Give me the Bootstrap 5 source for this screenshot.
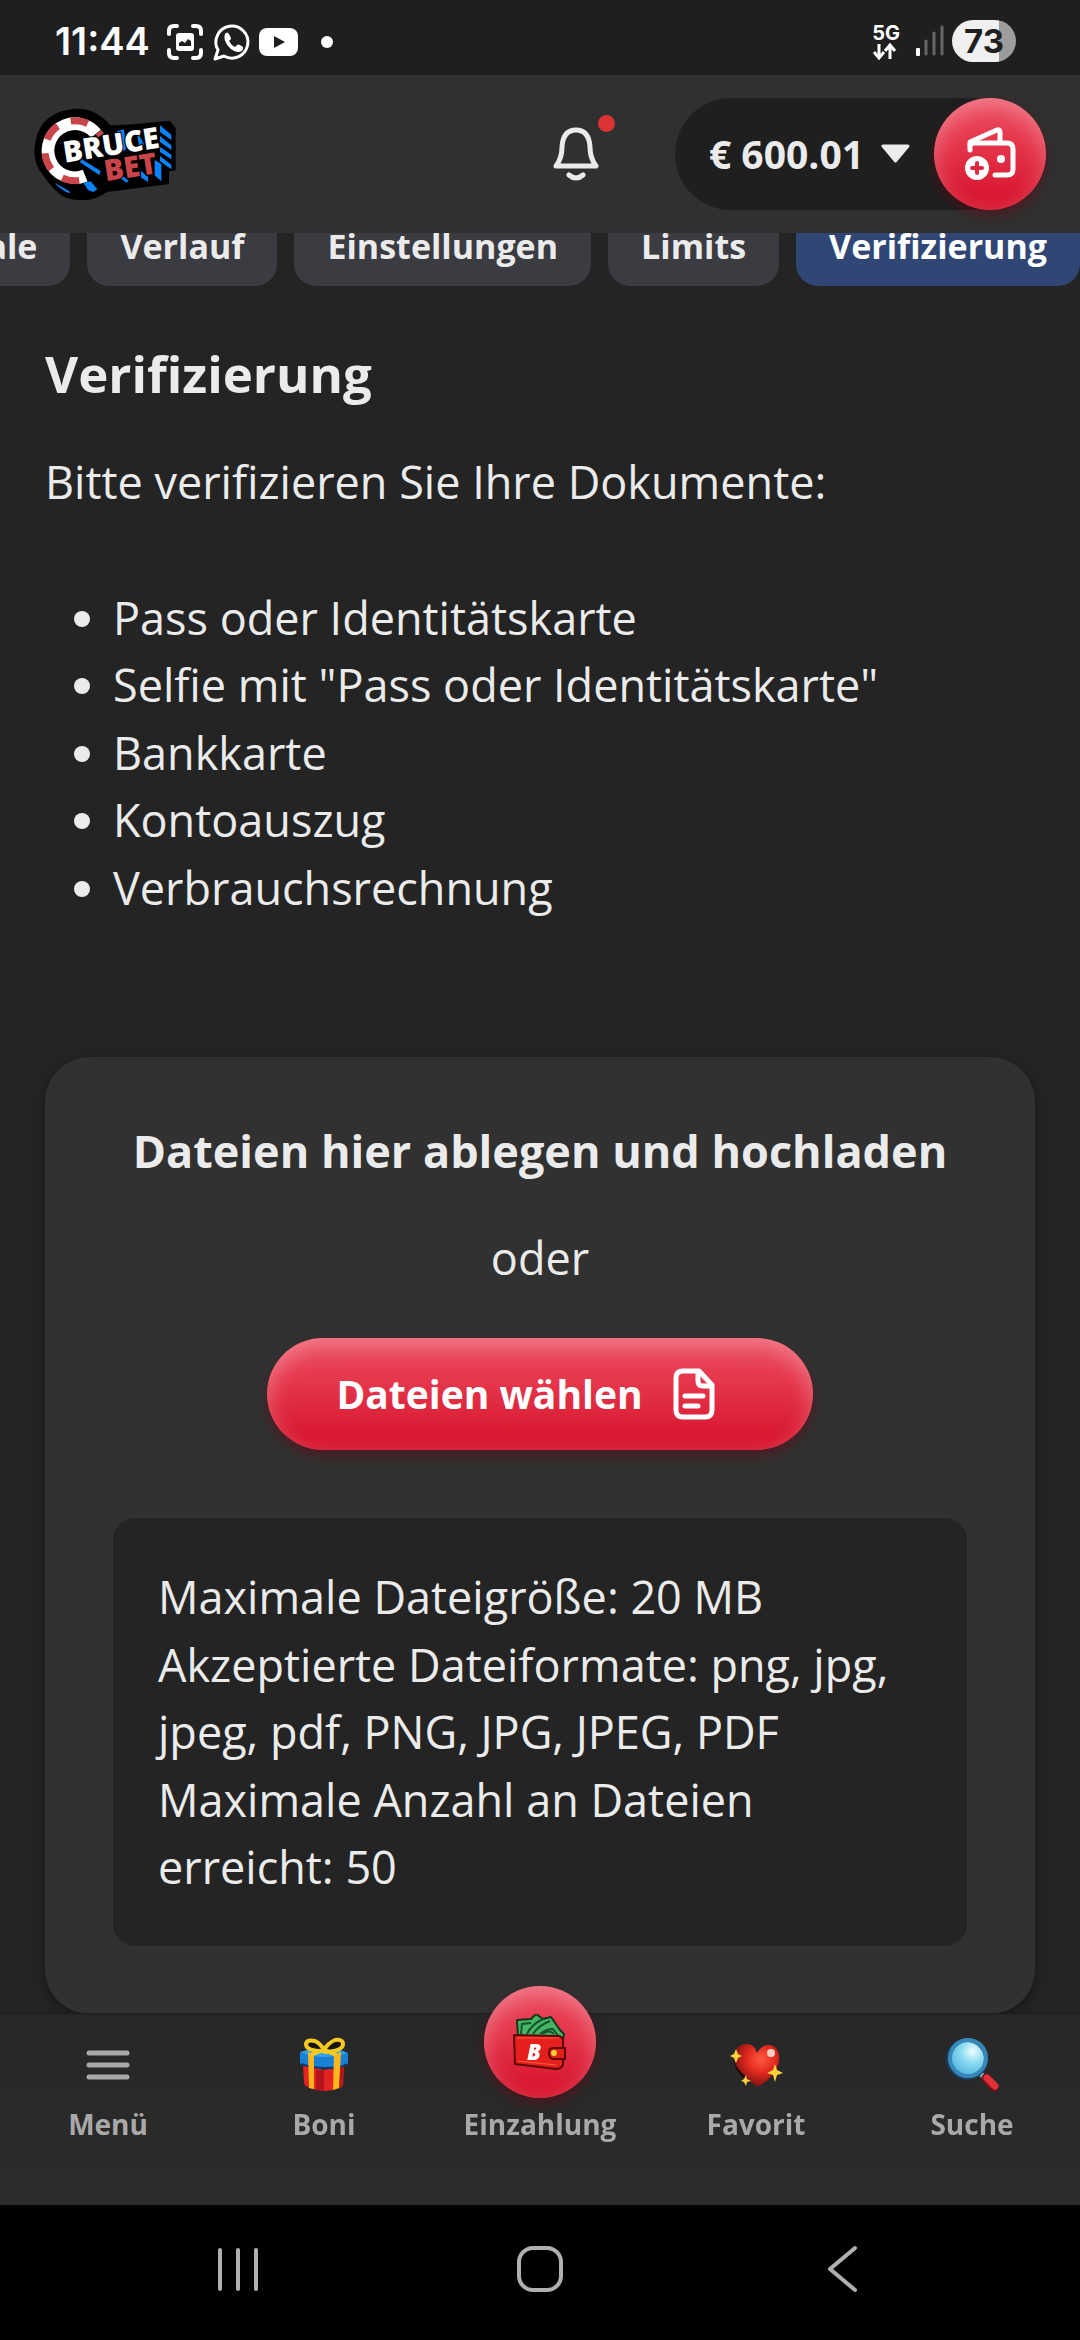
<!DOCTYPE html>
<html lang="de">
<head>
    <meta charset="UTF-8">
    <meta name="viewport" content="width=device-width, initial-scale=1.0">
    <title>Verifizierung - BruceBet</title>
    <link href="https://cdn.jsdelivr.net/npm/bootstrap@5.3.0/dist/css/bootstrap.min.css" rel="stylesheet">
    <style>
        body {
            background-color: #242424;
            color: #ebebeb;
            font-family: "Open Sans", "Noto Sans", sans-serif;
            font-size: 45px;
            line-height: 1.5;
        }
        svg { display: block; flex-shrink: 0; }

        /* Statusleiste */
        .status-bar {
            background-color: #1f1f1f;
            height: 75px;
            padding: 7px 64px 0 55px;
            color: #fff;
            font-family: Inter, Roboto, sans-serif;
        }
        .clock { font-size: 38px; font-weight: 600; line-height: 48px; margin-right: 17px; }
        .net-type { font-size: 20px; font-weight: 700; line-height: 20px; }
        .battery {
            width: 64px;
            height: 42px;
            border-radius: 21px;
            background: linear-gradient(90deg, #f0f0f0 73%, #9c9c9c 73%);
            color: #1f1f1f;
            font-size: 33px;
            font-weight: 700;
            line-height: 42px;
        }

        /* Kopfzeile */
        .top-bar {
            background-color: #303030;
            height: 158px;
            padding: 0 34px;
        }
        .bell-btn { margin-right: 76px; }
        .alert-dot {
            top: -12px;
            right: -16px;
            width: 17px;
            height: 17px;
            background-color: #dc3434;
        }
        .balance { background-color: #1f1f1f; height: 112px; }
        .balance-btn { padding: 0 24px 0 34px; gap: 17px; color: #ebebeb; font-size: 39px; font-weight: 700; }
        .red-btn {
            border: 0;
            color: #fff;
            background: linear-gradient(180deg, #ec4a5f 0%, #e5364b 40%, #d81830 88%);
            box-shadow: inset 0 8px 22px rgba(255, 255, 255, .3), 0 6px 12px rgba(110, 0, 20, .45);
        }
        .round-btn { width: 112px; height: 112px; }

        /* Reiter */
        main { padding-top: 233px; padding-bottom: 327px; }
        .tab-strip { margin-top: -31px; gap: 17px; overflow: hidden; }
        .tab-link {
            padding: 19px 33px 14px;
            border-radius: 22px;
            background-color: #3b3b42;
            color: #ebebeb;
            font-size: 34px;
            font-weight: 700;
            text-decoration: none;
            white-space: nowrap;
        }
        .tab-link.active { background-color: #304674; color: #fff; }

        .page-body { padding: 50px 45px 0; }
        .page-title { font-size: 51px; font-weight: 700; line-height: 75px; margin-bottom: 37px; }
        .intro { margin-bottom: 68px; }
        .doc-list { padding-left: 68px; margin-bottom: 136px; }

        .upload-box {
            background-color: #313131;
            border-radius: 45px;
            padding: 60px 68px 68px;
            box-shadow: 0 4px 12px rgba(0, 0, 0, .35);
        }
        .upload-title { font-size: 45px; font-weight: 700; line-height: 1.5; margin-bottom: 39px; }
        .or-text { margin-bottom: 47px; }
        .choose-btn { height: 112px; padding: 0 85px 0 69px; gap: 17px; font-size: 39px; font-weight: 700; margin-bottom: 68px; }
        .limits-box { background-color: #242424; border-radius: 22px; padding: 45px; }

        /* Untere Navigation */
        .bottom-nav { height: 192px; background: linear-gradient(180deg, #272727, #2c2c2c); border-top: 1px solid #1c1c1c; }
        .nav-cell {
            flex: 1 1 0;
            padding-top: 23px;
            color: #a9a9a9;
            font-size: 28px;
            font-weight: 700;
            line-height: 42px;
            text-decoration: none;
        }
        .nav-cell svg { margin-bottom: 10px; }
        .deposit { margin-top: -51px; margin-bottom: 5px; }
        .deposit svg { margin-bottom: 0; }
        .system-nav { height: 135px; background-color: #000; padding: 0 87px 7px; }
    </style>
</head>
<body>
    <header class="fixed-top">
        <div class="status-bar d-flex align-items-center justify-content-between">
            <div class="d-flex align-items-center">
                <span class="clock">11:44</span>
                <svg width="36" height="48" viewBox="0 0 36 48" fill="none" stroke="#fff" stroke-width="4" stroke-linecap="round">
                    <path d="M2 17v-3q0-5 5-5h3M26 9h3q5 0 5 5v3M34 33v3q0 5-5 5h-3M10 41H7q-5 0-5-5v-3"/>
                    <rect x="9" y="16" width="18" height="18" rx="3" fill="#fff" stroke="none"/>
                    <path d="M12 29v-3l3-2 3 2 3-4 3 2v5z" fill="#1f1f1f" stroke="none"/>
                </svg>
                <svg class="ms-2" width="40" height="48" viewBox="0 0 40 48">
                    <path d="M4 42l3-9a16 16 0 1 1 6 6z" fill="none" stroke="#fff" stroke-width="3" stroke-linejoin="round"/>
                    <path d="M14 17q2-3 4 0l2 4q0 2-2 3 2 4 6 6l2-2q1-1 3 0l3 2q1 4-4 5-6 0-11-6-5-7-3-12z" fill="#fff"/>
                </svg>
                <svg class="ms-2" width="40" height="48" viewBox="0 0 40 48">
                    <rect x="0" y="11" width="39" height="28" rx="8" fill="#fff"/>
                    <path d="M15 19v12l11-6z" fill="#1f1f1f"/>
                </svg>
                <svg width="40" height="48" viewBox="0 0 40 48"><circle cx="28" cy="25" r="6" fill="#fff"/></svg>
            </div>
            <div class="d-flex align-items-center">
                <div class="me-3">
                    <div class="net-type">5G</div>
                    <svg width="26" height="17" viewBox="0 0 26 17" fill="none" stroke="#fff" stroke-width="3">
                        <path d="M7 1v13M2 9l5 6 5-6M18 16V3M13 8l5-6 5 6"/>
                    </svg>
                </div>
                <svg class="me-2" width="28" height="42" viewBox="0 0 28 42">
                    <rect x="0" y="28" width="4" height="8" rx="1" fill="#fff"/>
                    <path d="M10 21v13M18 13v21M26 7v27" stroke="#666" stroke-width="3" stroke-linecap="round"/>
                </svg>
                <div class="battery text-center">73</div>
            </div>
        </div>

        <nav class="top-bar d-flex align-items-center">
            <a href="#" class="me-auto" aria-label="BruceBet">
                <svg width="144" height="92" viewBox="42 52 432 276" font-family="Open Sans, sans-serif" font-weight="800">
                    <path d="M145 57q75-14 126 47l50-2 128-12 18 22v127l-20 3v38l-186 24q-60 42-130 14-34-22-58-60Q42 225 43 178 50 73 145 57z" fill="#000"/>
                    <!-- Chip -->
                    <circle cx="165" cy="180" r="81" fill="none" stroke="#fff" stroke-width="38" stroke-dasharray="356 400" transform="rotate(68 165 180)"/>
                    <circle cx="165" cy="180" r="90" fill="none" stroke="#c94549" stroke-width="21" stroke-dasharray="52 42 52 42 52 42 52 42 12 400" transform="rotate(82 165 180)"/>
                    <!-- Schatten der Schrift -->
                    <g fill="#0b82f5">
                        <path d="M190 276l22-4 20 24-12 8-16-6zM104 276l44 26 2 6q-26-8-46-32zM184 205l58 36-4 12-58-38z"/>
                        <path d="M420 104l34 28v16l-34-24zM420 136l34 28v14l-34-24zM420 168l34 24v14l-34-22zM420 196l34 26v14l-34-24zM404 208l20 12v52l-20-18zM362 240l22 18v16l-22-14zM300 250l26 20-6 6-22-16zM232 170l22 24-12 8-12-12zM290 122l22-6 6 60-14 8zM350 120l22 40-14 14z"/>
                    </g>
                    <g stroke="#000" stroke-width="6" paint-order="stroke">
                        <text x="257" y="272" font-size="88" fill="#c94549" transform="rotate(-9 257 272)">BET</text>
                        <text x="134" y="216" font-size="88" fill="#fff" transform="rotate(-9 134 216)">BRUCE</text>
                    </g>
                </svg>
            </a>
            <button type="button" class="bell-btn btn p-0 border-0 position-relative" aria-label="Mitteilungen">
                <svg width="46" height="54" viewBox="0 0 46 54" fill="none" stroke="#ebebeb" stroke-width="5" stroke-linecap="round" stroke-linejoin="round">
                    <path d="M3 39q6-8 6-19Q10 3 23 3t14 17q0 11 6 19z"/>
                    <path d="M16 48q7 6 14 0"/>
                </svg>
                <span class="alert-dot position-absolute rounded-circle"></span>
            </button>
            <div class="balance d-flex align-items-center rounded-pill">
                <button type="button" class="balance-btn btn border-0 d-flex align-items-center">
                    <span>€ 600.01</span>
                    <svg width="29" height="20" viewBox="0 0 29 20"><path d="M2 2h25L14.5 17z" fill="#ebebeb" stroke="#ebebeb" stroke-width="3" stroke-linejoin="round"/></svg>
                </button>
                <button type="button" class="red-btn round-btn btn rounded-circle p-0 d-flex align-items-center justify-content-center" aria-label="Einzahlen">
                    <svg width="52" height="54" viewBox="0 0 52 54" fill="none" stroke="#fff" stroke-width="5" stroke-linecap="round" stroke-linejoin="round">
                        <path d="M6 23v-4q0-3 4-3h33q6 0 6 6v20q0 6-6 6H31"/>
                        <path d="M6 18v-3L33 3q3-1 3 2v10"/>
                        <circle cx="37" cy="32" r="4" fill="#fff" stroke="none"/>
                        <circle cx="13" cy="41" r="12" fill="#fff" stroke="none"/>
                        <path d="M13 36v10M8 41h10" stroke="#e0283f" stroke-width="4"/>
                    </svg>
                </button>
            </div>
        </nav>
    </header>

    <main>
        <div class="tab-strip d-flex justify-content-end">
            <a href="#" class="tab-link">Pokale</a>
            <a href="#" class="tab-link">Verlauf</a>
            <a href="#" class="tab-link">Einstellungen</a>
            <a href="#" class="tab-link">Limits</a>
            <a href="#" class="tab-link active" aria-current="page">Verifizierung</a>
        </div>

        <div class="page-body">
            <h1 class="page-title">Verifizierung</h1>
            <p class="intro">Bitte verifizieren Sie Ihre Dokumente:</p>
            <ul class="doc-list">
                <li>Pass oder Identitätskarte</li>
                <li>Selfie mit "Pass oder Identitätskarte"</li>
                <li>Bankkarte</li>
                <li>Kontoauszug</li>
                <li>Verbrauchsrechnung</li>
            </ul>

            <!-- Upload -->
            <section class="upload-box d-flex flex-column align-items-center">
                <h2 class="upload-title text-center">Dateien hier ablegen und hochladen</h2>
                <p class="or-text">oder</p>
                <button type="button" class="choose-btn red-btn btn rounded-pill d-flex align-items-center">
                    <span>Dateien wählen</span>
                    <svg width="68" height="68" viewBox="0 0 68 68" fill="none" stroke="#fff" stroke-width="5" stroke-linecap="round" stroke-linejoin="round">
                        <path d="M23 11h16l13 14v25q0 7-7 7H23q-7 0-7-7V18q0-7 7-7z"/>
                        <path d="M38 12v9q0 5 5 5h8M25 36h18M25 46h13"/>
                    </svg>
                </button>
                <div class="limits-box w-100">
                    Maximale Dateigröße: 20 MB<br>
                    Akzeptierte Dateiformate: png, jpg, jpeg, pdf, PNG, JPG, JPEG, PDF<br>
                    Maximale Anzahl an Dateien erreicht: 50
                </div>
            </section>
        </div>
    </main>

    <footer class="fixed-bottom">
        <nav class="bottom-nav d-flex">
            <a href="#" class="nav-cell d-flex flex-column align-items-center">
                <svg width="56" height="56" viewBox="0 0 56 56" stroke="#a9a9a9" stroke-width="5" stroke-linecap="round"><path d="M9 16h38M9 28h38M9 40h38"/></svg>
                <span>Menü</span>
            </a>
            <a href="#" class="nav-cell d-flex flex-column align-items-center">
                <svg width="56" height="56" viewBox="0 0 56 56">
                    <path d="M7 28l21 5 20-4-1 19q-1 4-18 6Q9 52 8 46z" fill="#e32222"/>
                    <path d="M20 33h8v21q-6 0-8-2zM41 31l7-2-2 20-6 3z" fill="#b5141c"/>
                    <path d="M4 15q14-4 24-3 14-1 24 4v11q-6 4-23 5Q12 31 4 27z" fill="#1680d6"/>
                    <path d="M5 15q11-4 23-3 13 0 23 4-11 4-23 4-14 0-23-5z" fill="#36a0ea"/>
                    <path d="M5 27q12 4 24 4 16 0 22-4" fill="none" stroke="#0c3966" stroke-width="2"/>
                    <path d="M12 15l6 2v35l-5-1zM38 17l7-2-2 36-6 2z" fill="#ffb51c"/>
                    <path d="M27 14Q10 14 10 7q1-5 9-3 6 3 9 9 4-7 11-10 8-1 8 4 0 7-18 8z" fill="#171400" stroke="#f4ca22" stroke-width="4" stroke-linejoin="round"/>
                    <path d="M27 13l-12 5M29 13l11 5" stroke="#f4ca22" stroke-width="4"/>
                </svg>
                <span>Boni</span>
            </a>
            <a href="#" class="nav-cell d-flex flex-column align-items-center">
                <span class="deposit red-btn round-btn rounded-circle d-flex align-items-center justify-content-center flex-shrink-0">
                    <svg width="54" height="56" viewBox="0 0 54 56">
                        <path d="M5 22L4 6l14-1 5-5 7 5 8-2 9 13 4 4-2 12-30-4z" fill="#45b565" stroke="#14361c" stroke-width="2" stroke-linejoin="round"/>
                        <path d="M8 20l1-10 9-1M14 20q5-10 16-15M20 20q6-9 17-13M27 20q6-5 13-5l6 8M30 20q6-5 11 0" fill="none" stroke="#14522a" stroke-width="2"/>
                        <path d="M1 21l45 1q4 1 4 5v24q-2 4-7 4L2 50z" fill="#e5201c" stroke="#5c0908" stroke-width="2" stroke-linejoin="round"/>
                        <path d="M4 24h42M5 47l38 4" fill="none" stroke="#ff5a3c" stroke-width="1"/>
                        <path d="M52 34H40q-4 0-4 5t4 6h12z" fill="#e5201c" stroke="#5c0908" stroke-width="2"/>
                        <circle cx="41" cy="39" r="3" fill="#ffd32c"/>
                        <text x="14" y="46" font-family="Open Sans, sans-serif" font-size="22" font-weight="800" font-style="italic" fill="#fff">B</text>
                    </svg>
                </span>
                <span>Einzahlung</span>
            </a>
            <a href="#" class="nav-cell d-flex flex-column align-items-center">
                <svg width="56" height="56" viewBox="0 0 56 56">
                    <defs>
                        <radialGradient id="heartFill" cx=".6" cy=".35" r=".7">
                            <stop offset="0" stop-color="#ff5a40"/><stop offset=".45" stop-color="#e22a20"/><stop offset="1" stop-color="#6e0d0c"/>
                        </radialGradient>
                    </defs>
                    <path d="M30 50Q6 34 6 19 8 6 20 7q7 1 9 9 5-9 13-8 10 2 9 16-2 14-21 26z" fill="url(#heartFill)"/>
                    <path d="M6 24q2 8 14 17l-2 2Q7 35 6 24z" fill="#240505"/>
                    <ellipse cx="43" cy="16" rx="4" ry="4" fill="#ffd0c4"/>
                    <path d="M8 12l2 5 4 2-4 2-2 5-2-5-4-2 4-2zM47 27l2 6 6 3-6 2-2 7-2-7-6-2 6-3zM18 38l1 4 4 2-4 1-1 4-2-4-3-1 3-2z" fill="#ffd33b"/>
                </svg>
                <span>Favorit</span>
            </a>
            <a href="#" class="nav-cell d-flex flex-column align-items-center">
                <svg width="56" height="56" viewBox="0 0 56 56">
                    <defs>
                        <radialGradient id="lensFill" cx=".65" cy=".3" r=".75">
                            <stop offset="0" stop-color="#f0fdff"/><stop offset=".4" stop-color="#8edcf2"/><stop offset="1" stop-color="#45aedb"/>
                        </radialGradient>
                    </defs>
                    <path d="M37 37l5 5" stroke="#78b5cf" stroke-width="5"/>
                    <path d="M42 41l8 9" stroke="#7c0e14" stroke-width="9" stroke-linecap="round"/>
                    <path d="M43 41l8 8" stroke="#e3303a" stroke-width="7" stroke-linecap="round"/>
                    <circle cx="23" cy="22" r="19" fill="url(#lensFill)" stroke="#173c5c" stroke-width="4"/>
                    <circle cx="24" cy="21" r="18" fill="none" stroke="#3787b8" stroke-width="4"/>
                </svg>
                <span>Suche</span>
            </a>
        </nav>
        <div class="system-nav d-flex align-items-center">
            <button type="button" class="btn border-0 p-0 flex-fill d-flex justify-content-center" aria-label="Letzte Apps">
                <svg width="48" height="48" viewBox="0 0 48 48" stroke="#b0b0b0" stroke-width="4" stroke-linecap="round"><path d="M6 5v39M24 5v39M42 5v39"/></svg>
            </button>
            <button type="button" class="btn border-0 p-0 flex-fill d-flex justify-content-center" aria-label="Startseite">
                <svg width="48" height="48" viewBox="0 0 48 48" fill="none" stroke="#b0b0b0" stroke-width="4"><rect x="3" y="3" width="42" height="42" rx="14"/></svg>
            </button>
            <button type="button" class="btn border-0 p-0 flex-fill d-flex justify-content-center" aria-label="Zurück">
                <svg width="48" height="48" viewBox="0 0 48 48" fill="none" stroke="#b0b0b0" stroke-width="4" stroke-linecap="round" stroke-linejoin="round"><path d="M37 3L12 24l25 21"/></svg>
            </button>
        </div>
    </footer>

    <script src="https://cdn.jsdelivr.net/npm/bootstrap@5.3.0/dist/js/bootstrap.bundle.min.js"></script>
</body>
</html>
